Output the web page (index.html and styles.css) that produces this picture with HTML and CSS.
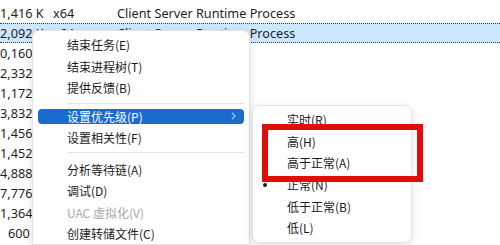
FILE: index.html
```html
<!DOCTYPE html>
<html lang="zh-CN">
<head>
<meta charset="utf-8">
<title>任务管理器 - 设置优先级</title>
<link rel="stylesheet" href="styles.css">
</head>
<body>
<div class="table">
  <div class="row"><span class="num">1,416 K</span><span class="arch">x64</span><span class="name">Client Server Runtime Process</span></div>
  <div class="row selected"><span class="num">2,092 K</span><span class="arch">x64</span><span class="name">Client Server Runtime Process</span></div>
  <div class="row"><span class="num">0,160 K</span></div>
  <div class="row"><span class="num">2,332 K</span></div>
  <div class="row"><span class="num">1,172 K</span></div>
  <div class="row"><span class="num">3,832 K</span></div>
  <div class="row"><span class="num">1,456 K</span></div>
  <div class="row"><span class="num">1,452 K</span></div>
  <div class="row"><span class="num">4,888 K</span></div>
  <div class="row"><span class="num">7,776 K</span></div>
  <div class="row"><span class="num">1,364 K</span></div>
  <div class="row"><span class="num">600 K</span></div>
</div>

<div class="menu main-menu">
  <div class="item">结束任务(E)</div>
  <div class="item">结束进程树(T)</div>
  <div class="item">提供反馈(B)</div>
  <div class="sep"></div>
  <div class="item active"><span class="label">设置优先级(P)</span>
    <svg class="chev" width="5" height="8" viewBox="0 0 5 8"><path d="M1 1 L4 4 L1 7" fill="none" stroke="#a9cdf3" stroke-width="1.2"/></svg>
  </div>
  <div class="item">设置相关性(F)</div>
  <div class="sep"></div>
  <div class="item">分析等待链(A)</div>
  <div class="item">调试(D)</div>
  <div class="item disabled">UAC 虚拟化(V)</div>
  <div class="item">创建转储文件(C)</div>
</div>

<div class="menu sub-menu">
  <div class="sitem"><span class="mark"></span>实时(R)</div>
  <div class="sitem"><span class="mark"></span>高(H)</div>
  <div class="sitem"><span class="mark"></span>高于正常(A)</div>
  <div class="sitem"><span class="mark"><span class="dot"></span></span>正常(N)</div>
  <div class="sitem"><span class="mark"></span>低于正常(B)</div>
  <div class="sitem"><span class="mark"></span>低(L)</div>
</div>

<div class="redbox"></div>
</body>
</html>
```
FILE: styles.css
```css
html, body {
  margin: 0;
  padding: 0;
  background: #ffffff;
  overflow: hidden;
}
body {
  width: 500px;
  height: 245px;
  position: relative;
  font-family: "Noto Sans", "Noto Sans CJK SC", sans-serif;
  color: #1f1f1f;
}

.table {
  padding-top: 3px;
  height: 242px;
  overflow: hidden;
}
.row {
  display: flex;
  align-items: center;
  height: 20px;
  box-sizing: border-box;
  font-size: 12.7px;
  white-space: nowrap;
}
.row.selected {
  background: #cce8ff;
  border-top: 1px dotted #404040;
  border-bottom: 1px dotted #404040;
}
.num {
  width: 41px;
  text-align: right;
  flex: none;
}
.arch {
  margin-left: 12px;
  width: 64px;
  flex: none;
}
.name {
  flex: none;
}

.menu {
  position: absolute;
  background: #ffffff;
  border: 1px solid #e3e3e3;
  border-radius: 7px;
  box-shadow: 0 3px 10px rgba(0, 0, 0, 0.12);
  box-sizing: border-box;
  font-family: "Noto Sans CJK SC", sans-serif;
  font-size: 12px;
  color: #1b1b1b;
  overflow: hidden;
}
.main-menu {
  left: 32px;
  top: 30px;
  width: 218px;
  height: 215px;
  padding: 3px 5px;
  border-bottom-left-radius: 0;
  border-bottom-right-radius: 0;
}
.item {
  height: 21.5px;
  display: flex;
  align-items: center;
  padding-left: 29px;
  padding-right: 8px;
  white-space: nowrap;
}
.item.active {
  height: 15px;
  margin: 3.25px 0;
  background: #1a6ccc;
  color: #ffffff;
  border-radius: 4px;
}
.item.active .label {
  flex: 1;
}
.chev {
  display: block;
}
.item.disabled {
  color: #a8a8a8;
}
.sep {
  height: 1px;
  margin: 4px 0 5px 30px;
  background: #e2e2e2;
}

.sub-menu {
  left: 252px;
  top: 105px;
  width: 160px;
  height: 138px;
  padding: 3px 5px;
}
.sitem {
  height: 21.6px;
  display: flex;
  align-items: center;
  white-space: nowrap;
}
.mark {
  width: 29px;
  flex: none;
  display: flex;
  align-items: center;
}
.dot {
  width: 4px;
  height: 4px;
  border-radius: 50%;
  background: #1b1b1b;
  margin-left: 5px;
}

.redbox {
  position: absolute;
  left: 262px;
  top: 124px;
  width: 161px;
  height: 58px;
  box-sizing: border-box;
  border: 6px solid #e00d0d;
}
```
